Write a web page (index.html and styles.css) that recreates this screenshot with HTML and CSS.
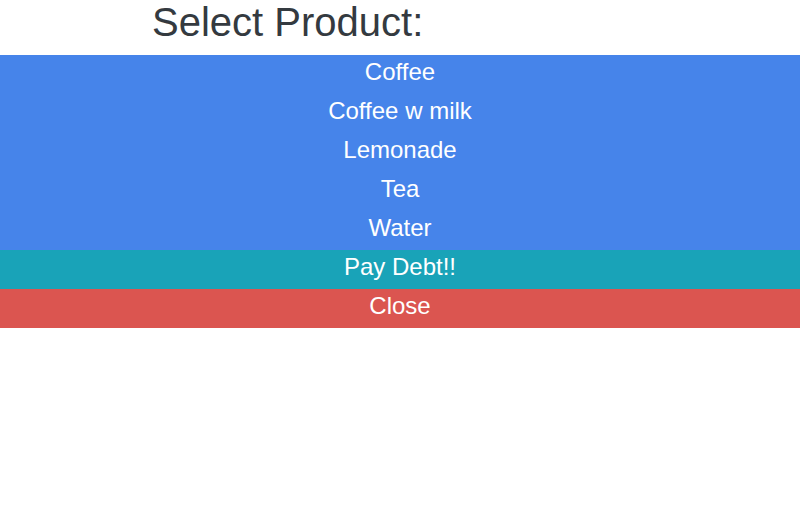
FILE: index.html
```html
<!DOCTYPE html>
<html>
<head>
<meta charset="utf-8">
<link rel="stylesheet" href="styles.css">
</head>
<body>
<h1 class="title">Select Product:</h1>
<div class="list">
  <div class="row row-product">Coffee</div>
  <div class="row row-product">Coffee w milk</div>
  <div class="row row-product">Lemonade</div>
  <div class="row row-product">Tea</div>
  <div class="row row-product">Water</div>
  <div class="row row-pay">Pay Debt!!</div>
  <div class="row row-close">Close</div>
</div>
</body>
</html>
```
FILE: styles.css
```css
html, body {
  margin: 0;
  padding: 0;
  background: #ffffff;
  font-family: "Liberation Sans", Arial, sans-serif;
}
.title {
  margin: 0;
  padding: 2px 0 13px 152px;
  font-size: 40px;
  line-height: 40px;
  font-weight: normal;
  color: #343a40;
}
.list {
  display: flex;
  flex-direction: column;
}
.row {
  height: 39px;
  box-sizing: border-box;
  padding-top: 5px;
  text-align: center;
  color: #ffffff;
  font-size: 24px;
  line-height: 24px;
}
.row-product {
  background: #4684ea;
}
.row-pay {
  background: #19a3b8;
}
.row-close {
  background: #db5550;
}
```
